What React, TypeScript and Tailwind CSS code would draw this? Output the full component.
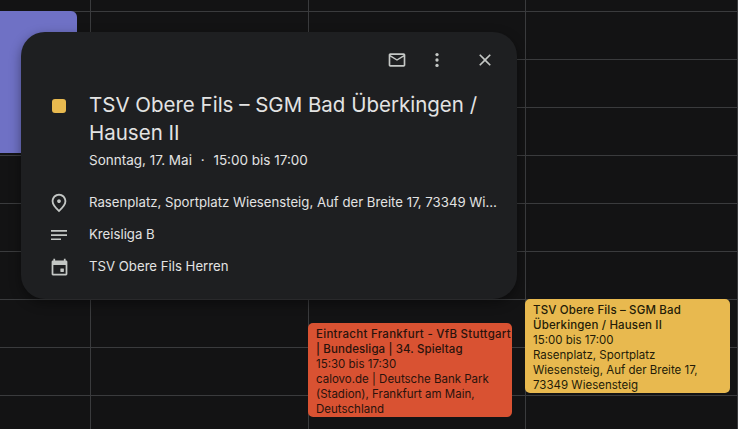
const font = "[font-family:'Inter','Liberation_Sans',sans-serif]";

const MailIcon = () => (
  <svg width="20" height="20" viewBox="0 0 24 24" fill="#c4c7c5">
    <path d="M20 4H4c-1.100 0-2 .9-2 2v12c0 1.100.9 2 2 2h16c1.100 0 2-.9 2-2V6c0-1.100-.9-2-2-2zm0 14H4V8l8 5 8-5v10zm-8-7L4 6h16l-8 5z" />
  </svg>
);

const DotsIcon = () => (
  <svg width="20" height="20" viewBox="0 0 24 24" fill="#c4c7c5">
    <circle cx="12" cy="5.500" r="2" />
    <circle cx="12" cy="12" r="2" />
    <circle cx="12" cy="18.500" r="2" />
  </svg>
);

const CloseIcon = () => (
  <svg width="20" height="20" viewBox="0 0 24 24" fill="#c4c7c5">
    <path d="M19 6.410 17.590 5 12 10.590 6.410 5 5 6.410 10.590 12 5 17.590 6.410 19 12 13.410 17.590 19 19 17.590 13.410 12z" />
  </svg>
);

const PinIcon = () => (
  <svg width="22" height="22" viewBox="0 0 24 24" fill="#c4c7c5">
    <path d="M12 12c-1.100 0-2-.9-2-2s.9-2 2-2 2 .9 2 2-.9 2-2 2zm6-1.800C18 6.570 15.350 4 12 4s-6 2.570-6 6.200c0 2.340 1.950 5.440 6 9.140 4.050-3.700 6-6.800 6-9.140zM12 2c4.200 0 8 3.220 8 8.200 0 3.320-2.670 7.250-8 11.800-5.330-4.550-8-8.480-8-11.800C4 5.220 7.800 2 12 2z" />
  </svg>
);

const NotesIcon = () => (
  <svg width="24" height="24" viewBox="0 0 24 24" fill="#c4c7c5">
    <path d="M4 7h16v1.700H4zM4 11.200h16v1.700H4zM4 15.400h10v1.700H4z" />
  </svg>
);

const CalendarIcon = () => (
  <svg width="21" height="21" viewBox="0 0 24 24" fill="#c4c7c5">
    <path d="M17 2v2H7V2H5v2H4.500C3.670 4 3 4.670 3 5.500v14c0 .83.670 1.500 1.500 1.500h15c.83 0 1.500-.67 1.500-1.500v-14c0-.83-.67-1.500-1.500-1.500H19V2h-2zM5 19V9h14v10H5z" />
    <rect x="13" y="13" width="4" height="4" rx="0.500" />
  </svg>
);

const cells = Array.from({ length: 40 });

const CalendarGrid = () => (
  <div className="grid grid-cols-[91px_218px_217px_212px] auto-rows-[48px] -mt-[36px]">
    {cells.map((_, i) => (
      <div key={i} className="border-r border-b border-[#3a3b3d]" />
    ))}
  </div>
);

const InfoRow = ({ icon, text }: { icon: React.ReactNode; text: string }) => (
  <div className="flex items-center h-8">
    <span className="w-[24px] ml-[26px] mr-[18px] shrink-0 flex justify-center">{icon}</span>
    <span className="text-[13.200px] text-[#e3e3e3] truncate w-[408px]">{text}</span>
  </div>
);

export default function App() {
  return (
    <div className={`relative w-[738px] h-[429px] overflow-hidden bg-[#131314] ${font}`}>
      <CalendarGrid />

      {/* purple event behind the popup */}
      <div className="absolute left-0 top-[11px] w-[77px] h-[142px] bg-[#6f71c5] rounded-r-[6px]" />

      {/* red event */}
      <div className="absolute left-[308px] top-[323px] w-[204px] h-[94px] bg-[#d95232] rounded-[5px] pl-2 pt-[2px] text-[11.500px] leading-[15px] text-[#2a120c] overflow-hidden">
        <p className="font-medium whitespace-nowrap tracking-[0.280px] mt-[2px]">Eintracht Frankfurt - VfB Stuttgart</p>
        <p className="font-medium tracking-[0.110px]">| Bundesliga | 34. Spieltag</p>
        <p>15:30 bis 17:30</p>
        <p>calovo.de | Deutsche Bank Park</p>
        <p>(Stadion), Frankfurt am Main,</p>
        <p>Deutschland</p>
      </div>

      {/* yellow event */}
      <div className="absolute left-[525px] top-[299px] w-[205px] h-[94px] bg-[#e8b94f] rounded-[5px] pl-2 pt-[4px] text-[11.500px] leading-[15px] text-[#241c08] overflow-hidden">
        <p className="font-medium tracking-[0.150px]">TSV Obere Fils – SGM Bad</p>
        <p className="font-medium tracking-[0.150px]">Überkingen / Hausen II</p>
        <p>15:00 bis 17:00</p>
        <p>Rasenplatz, Sportplatz</p>
        <p>Wiesensteig, Auf der Breite 17,</p>
        <p>73349 Wiesensteig</p>
      </div>

      {/* event popup */}
      <div className="absolute left-[21px] top-[32px] w-[496px] h-[267px] bg-[#1e1f21] rounded-[24px] shadow-[0_4px_12px_rgba(0,0,0,0.4)]">
        <div className="flex items-center justify-end h-[56px] pr-[22px]">
          <span className="mr-[20px]"><MailIcon /></span>
          <span className="mr-[28px]"><DotsIcon /></span>
          <CloseIcon />
        </div>
        <div className="flex">
          <span className="w-[14px] h-[14px] ml-[31px] mt-[11px] bg-[#e8b94f] rounded-[3px] shrink-0" />
          <div className="ml-[23px] pt-[3px]">
            <h1 className="text-[20.500px] leading-[28px] text-[#e3e3e3]">
              TSV Obere Fils – SGM Bad Überkingen / Hausen II
            </h1>
            <p className="text-[13.500px] leading-[20px] mt-[3px] text-[#e3e3e3]">
              Sonntag, 17. Mai <span className="mx-[5px]">·</span> 15:00 bis 17:00
            </p>
          </div>
        </div>
        <div className="mt-[17px]">
          <InfoRow icon={<PinIcon />} text="Rasenplatz, Sportplatz Wiesensteig, Auf der Breite 17, 73349 Wiesensteig" />
          <InfoRow icon={<NotesIcon />} text="Kreisliga B" />
          <InfoRow icon={<CalendarIcon />} text="TSV Obere Fils Herren" />
        </div>
      </div>
    </div>
  );
}
